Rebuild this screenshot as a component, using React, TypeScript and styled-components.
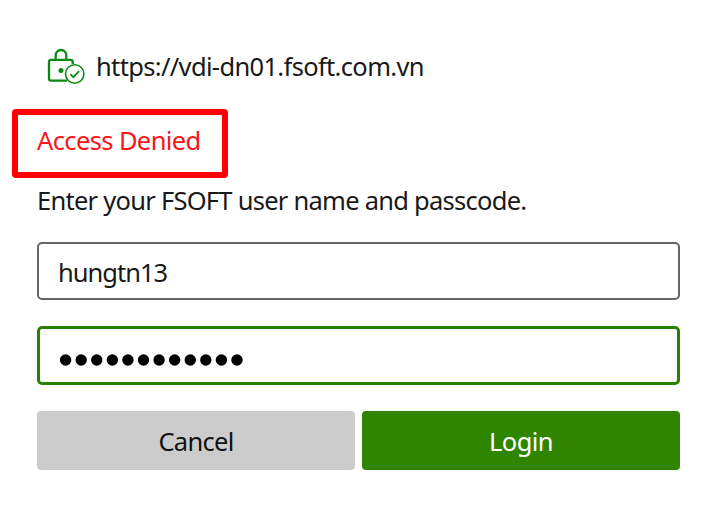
import React from 'react';
import styled, { createGlobalStyle } from 'styled-components';

const GlobalStyle = createGlobalStyle`
  * { box-sizing: border-box; }
  body {
    margin: 0;
    background: #fff;
    color: #191919;
    font-family: "Noto Sans", "Open Sans", sans-serif;
    font-size: 25.5px;
    line-height: 36px;
  }
`;

const Dialog = styled.main`
  display: flex;
  flex-direction: column;
  width: 709px;
  height: 509px;
  padding: 48px 29px 0 37px;
  overflow: hidden;
`;

const SiteRow = styled.header`
  display: flex;
  height: 36px;
  padding-left: 10px;
  gap: 10px;
`;

const Text = styled.span<{ $spacing: number }>`
  letter-spacing: ${({ $spacing }) => $spacing}px;
  white-space: pre;
`;

const ErrorBox = styled.div`
  width: 216px;
  height: 69px;
  margin: 25px 0 0 -25px;
  padding: 7px 0 0 19px;
  border: 6px solid #fe0000;
  border-radius: 4px;
  color: #fb1418;
`;

const Prompt = styled.p`
  margin: 4px 0 0;
`;

const Form = styled.form`
  display: flex;
  flex-direction: column;
  margin-top: 24px;
  gap: 26px;
`;

const Field = styled.div<{ $active?: boolean }>`
  display: flex;
  align-items: center;
  width: 643px;
  height: ${({ $active }) => ($active ? '59px' : '58px')};
  padding: ${({ $active }) => ($active ? '8px 0 0 20px' : '2px 0 0 19px')};
  border: ${({ $active }) => ($active ? '3px solid #2a8000' : '2px solid #666')};
  border-radius: 5px;
`;

const Actions = styled.div`
  display: grid;
  grid-template-columns: 318px 318px;
  gap: 7px;
`;

const Button = styled.button<{ $primary?: boolean }>`
  height: 59px;
  padding: 0;
  border: 0;
  border-radius: 4px;
  font: inherit;
  color: ${({ $primary }) => ($primary ? '#fff' : '#111')};
  background: ${({ $primary }) => ($primary ? '#2f8500' : '#ccc')};
`;

const SecureIcon = () => (
  <svg width="39" height="36" viewBox="0 0 39 36" fill="none" stroke="#0b8a12">
    <path d="M25.700 16v-2q0-2.200-2.200-2.200H4.200Q2 11.800 2 14v16.400Q2 32.600 4.200 32.600H20" strokeWidth="2.300" />
    <path d="M8.700 11.500V7.300a5.300 5.300 0 0 1 10.600 0v4.200" strokeWidth="2.300" />
    <circle cx="14" cy="22.600" r="2.500" fill="#0b8a12" stroke="none" />
    <circle cx="27.700" cy="26" r="9.200" fill="#fff" strokeWidth="1.600" />
    <path d="m23.400 26.200 3 3 5.700-6" strokeWidth="1.800" />
  </svg>
);

const MaskDots = ({ count }: { count: number }) => (
  <svg width="184" height="12" viewBox="0 0 184 12">
    {Array.from({ length: count }, (_, i) => (
      <circle key={i} cx={5.6 + i * 15.58} cy="6" r="5.7" />
    ))}
  </svg>
);

export default function App() {
  return (
    <>
      <GlobalStyle />
      <Dialog>
        <SiteRow>
          <SecureIcon />
          <Text $spacing={-0.66}>https://vdi-dn01.fsoft.com.vn</Text>
        </SiteRow>
        <ErrorBox role="alert"><Text $spacing={-0.62}>Access Denied</Text></ErrorBox>
        <Prompt><Text $spacing={-0.74}>Enter your FSOFT user name and passcode.</Text></Prompt>
        <Form onSubmit={(e) => e.preventDefault()}>
          <Field><Text $spacing={-1}>hungtn13</Text></Field>
          <Field $active><MaskDots count={12} /></Field>
          <Actions>
            <Button type="button"><Text $spacing={-0.7}>Cancel</Text></Button>
            <Button type="submit" $primary><Text $spacing={-0.6}>Login</Text></Button>
          </Actions>
        </Form>
      </Dialog>
    </>
  );
}
